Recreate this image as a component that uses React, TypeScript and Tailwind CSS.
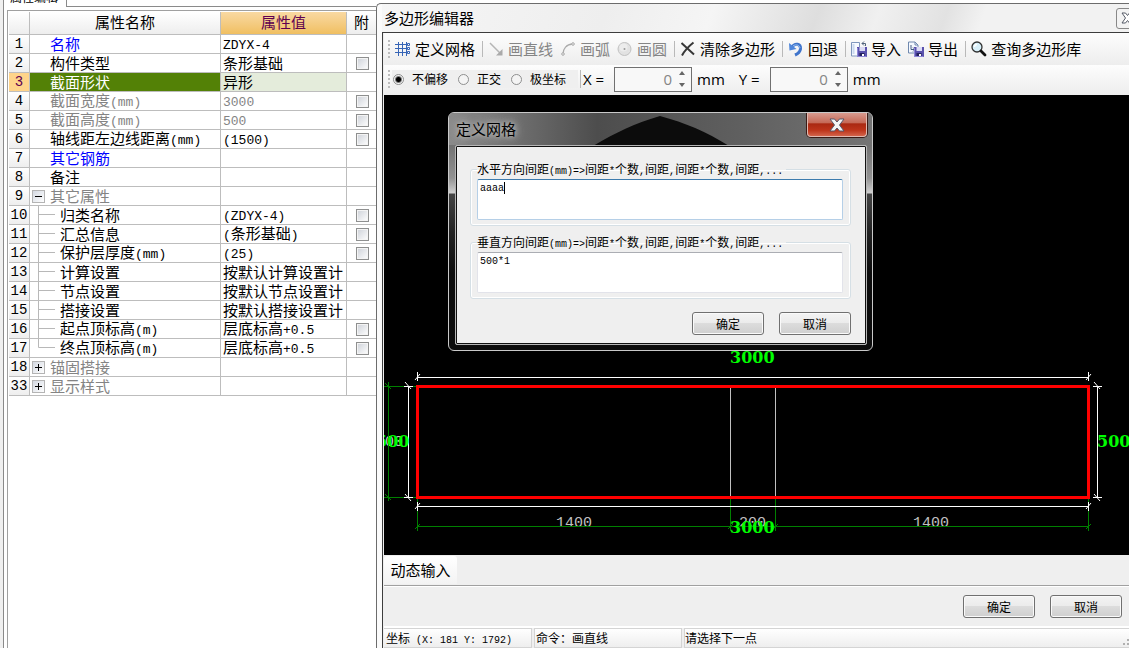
import { useState } from "react";
import type { ReactNode } from "react";

type Row = {
  no: number;
  name: string;
  value?: string;
  check?: boolean;
  kind?: "link" | "muted" | "active";
  tree?: "open" | "closed" | "child" | "last";
};

const rows: Row[] = [
  { no: 1, name: "名称", value: "ZDYX-4", kind: "link" },
  { no: 2, name: "构件类型", value: "条形基础", check: true },
  { no: 3, name: "截面形状", value: "异形", kind: "active" },
  { no: 4, name: "截面宽度(mm)", value: "3000", check: true, kind: "muted" },
  { no: 5, name: "截面高度(mm)", value: "500", check: true, kind: "muted" },
  { no: 6, name: "轴线距左边线距离(mm)", value: "(1500)", check: true },
  { no: 7, name: "其它钢筋", kind: "link" },
  { no: 8, name: "备注" },
  { no: 9, name: "其它属性", kind: "muted", tree: "open" },
  { no: 10, name: "归类名称", value: "(ZDYX-4)", check: true, tree: "child" },
  { no: 11, name: "汇总信息", value: "(条形基础)", check: true, tree: "child" },
  { no: 12, name: "保护层厚度(mm)", value: "(25)", check: true, tree: "child" },
  { no: 13, name: "计算设置", value: "按默认计算设置计", tree: "child" },
  { no: 14, name: "节点设置", value: "按默认节点设置计", tree: "child" },
  { no: 15, name: "搭接设置", value: "按默认搭接设置计", tree: "child" },
  { no: 16, name: "起点顶标高(m)", value: "层底标高+0.5", check: true, tree: "child" },
  { no: 17, name: "终点顶标高(m)", value: "层底标高+0.5", check: true, tree: "last" },
  { no: 18, name: "锚固搭接", kind: "muted", tree: "closed" },
  { no: 33, name: "显示样式", kind: "muted", tree: "closed" },
];

const CJK = "font-['Noto_Sans_CJK_SC',sans-serif]";
const MONO = "font-['Liberation_Mono',monospace]";

// latin runs are half the width of a chinese character
const Mixed = ({ text, small }: { text: string; small?: boolean }) => (
  <>
    {text.split(/([\x20-\x7e]+)/).map((part, i) =>
      i % 2 ? (
        <span key={i} className={`${MONO} whitespace-pre ${small ? "text-[10px]" : "text-[13px]"}`}>{part}</span>
      ) : (
        part
      )
    )}
  </>
);

const TreeMark = ({ tree }: { tree: Row["tree"] }) => {
  if (tree === "child" || tree === "last") {
    return (
      <svg width="30" height="18" className="shrink-0" stroke="#b8b8b8" fill="none">
        <path d={tree === "last" ? "M8.5 0V8.5H25" : "M8.5 0V18M8.5 8.5H25"} />
      </svg>
    );
  }
  if (tree) {
    return (
      <button type="button" aria-label={tree === "open" ? "收起" : "展开"} className="mr-[5px] ml-[2px] size-[13px] shrink-0 border border-[#b4b4b4] bg-linear-to-br from-[#d4d9e2] to-white">
        <svg width="11" height="11" stroke="#000">
          <path d={tree === "open" ? "M2 5.5H9" : "M2 5.5H9M5.5 2V9"} />
        </svg>
      </button>
    );
  }
  return <span className="w-5 shrink-0" />;
};

const PropertyTable = () => (
  <table className={`${CJK} w-full table-fixed border-separate border-spacing-0 text-[15px] leading-[18px]`}>
    <colgroup>
      <col className="w-[21px]" />
      <col />
      <col className="w-[126px]" />
      <col className="w-[29px]" />
    </colgroup>
    <thead>
      <tr className="h-[23px] bg-linear-to-b from-white to-[#ededed]">
        <th className="border-r border-b border-[#bdbdbd] p-0" />
        <th className="border-r border-b border-[#bdbdbd] p-0 pb-[2px] font-normal">属性名称</th>
        <th className="border-r border-b border-[#bdbdbd] bg-linear-to-b from-[#f9d9a2] to-[#f0bf60] p-0 pb-[2px] font-normal text-[#600050]">属性值</th>
        <th className="border-b border-[#bdbdbd] p-0 pb-[2px] font-normal">附</th>
      </tr>
    </thead>
    <tbody>
      {rows.map((r) => (
        <tr key={r.no} className="h-[19px]">
          <td className={`border-r border-b border-[#bdbdbd] p-0 text-center ${r.kind === "active" ? "bg-[#ffd48a] text-[#600050]" : "bg-linear-to-b from-white to-[#eeeeee]"}`}>
            <div className={`${MONO} h-[18px] text-[14px]`}>{r.no}</div>
          </td>
          <td className={`border-r border-b border-[#bdbdbd] p-0 ${r.kind === "active" ? "bg-[#538106] text-white" : r.kind === "link" ? "text-[#0000ff]" : r.kind === "muted" ? "text-[#848484]" : ""}`}>
            <div className="flex h-[18px] items-center whitespace-nowrap">
              <TreeMark tree={r.tree} />
              <span><Mixed text={r.name} /></span>
            </div>
          </td>
          <td className={`border-r border-b border-[#bdbdbd] p-0 ${r.kind === "active" ? "bg-[#e4ecdb]" : r.kind === "muted" ? "text-[#848484]" : ""}`}>
            <div className="flex h-[18px] items-center pl-[2px] whitespace-nowrap">
              <span><Mixed text={r.value ?? ""} /></span>
            </div>
          </td>
          <td className="border-b border-[#bdbdbd] p-0">
            {r.check && (
              <input type="checkbox" aria-label={r.name} className="ml-[9px] block size-[13px] appearance-none border border-[#8e8f8f] bg-linear-to-br from-[#cdd1d8] to-white shadow-[inset_0_0_0_1px_#f4f4f4] checked:bg-[#538106]" />
            )}
          </td>
        </tr>
      ))}
    </tbody>
  </table>
);

const Grip = () => (
  <svg width="3" height="20" className="mr-px shrink-0" stroke="#bcbcbc" strokeWidth="2" strokeDasharray="2 2">
    <path d="M1 1V19" />
  </svg>
);

const Sep = () => <span className="mr-px ml-[3px] h-4 w-px shrink-0 bg-[#b9b9b9]" />;

const Tool = ({ icon, label, disabled }: { icon: ReactNode; label: string; disabled?: boolean }) => (
  <button type="button" disabled={disabled} className="flex shrink-0 items-center gap-1 px-[3px] text-[15px] leading-5 disabled:text-[#858585]">
    <svg width="16" height="16" viewBox="0 0 16 16" fill="none">{icon}</svg>
    {label}
  </button>
);

const floppy = (
  <>
    <path d="M6 6H16V16H7L6 15Z" fill="#5a52ad" />
    <path d="M8.5 6H14V10H8.5Z" fill="#dcdcf5" />
    <path d="M8.5 12H13.5V16H8.5Z" fill="#24215e" />
    <path d="M11 13H13V15.500H11Z" fill="#fff" />
    <path d="M6.500 7V15.500H15.500" stroke="#8e87d8" />
  </>
);

const icons = {
  grid: (
    <>
      <path d="M0 3.500H12M0 7.500H13M0 11.500H12M3.500 1V15M7.500 1V15M11.500 1V15" stroke="#3765b6" />
      <path d="M12.500 2.500H14.500V4.500H12.500ZM12.500 6.500H14.500V8.500H12.500ZM12.500 10.500H14.500V12.500H12.500Z" stroke="#3765b6" fill="#fff" />
    </>
  ),
  line: (
    <>
      <path d="M2 2L13 13" stroke="#b5b5b5" strokeWidth="1.500" />
      <path d="M14.500 8V14.500H8Z" fill="#aaa" />
    </>
  ),
  arc: (
    <>
      <path d="M3 13C3 8 6 3.500 13 3" stroke="#aaa" strokeWidth="1.300" />
      <circle cx="3" cy="13" r="1.300" fill="#eee" stroke="#aaa" />
      <circle cx="13" cy="3" r="1.300" fill="#eee" stroke="#aaa" />
    </>
  ),
  circle: (
    <>
      <circle cx="7.500" cy="8" r="6.500" fill="#e2e2e2" stroke="#c0c0c0" />
      <circle cx="6.500" cy="6.500" r="4" fill="#ececec" />
      <circle cx="7.500" cy="8" r="1" fill="#999" />
    </>
  ),
  clear: <path d="M1.500 2L14 13.500M13.500 1.500C9 5 5 9 2 14.500" stroke="#383838" strokeWidth="2" />,
  undo: (
    <>
      <path d="M4 6C7 1.500 13 2.500 12.500 8C12 11 10.500 12.500 7 14" stroke="#3f74cb" strokeWidth="3" />
      <path d="M1 2L1.500 9.500L8.500 8Z" fill="#4f86da" />
      <path d="M5 5C8 2.800 11.500 4 12 7" stroke="#9cc3f3" />
    </>
  ),
  importIcon: (
    <>
      <path d="M.500 1.500H8.500V15H.500Z" fill="#f7faff" stroke="#7f97bd" />
      <path d="M2.500 3V13" stroke="#c9d8ef" strokeWidth="2" />
      {floppy}
      <path d="M11 2.500H14.500V5M13 .500L11 2.500L13 4.500" stroke="#53647c" />
    </>
  ),
  exportIcon: (
    <>
      <path d="M.500 1H7L10 4V12H.500Z" fill="#f5f9ff" stroke="#6f88ae" />
      <path d="M7 1V4H10" stroke="#6f88ae" />
      <path d="M3 4V8.500H6.500M5 6.500L7 8.500L5 10.500" stroke="#425b80" />
      {floppy}
    </>
  ),
  search: (
    <>
      <circle cx="6" cy="6" r="5" fill="#d8f0fa" stroke="#333" strokeWidth="1.300" />
      <path d="M3.500 6C3.500 4.500 4.500 3.500 6 3.500" stroke="#fff" strokeWidth="1.500" />
      <path d="M10 10L14 14" stroke="#111" strokeWidth="2.800" strokeLinecap="round" />
    </>
  ),
};

const NumberBox = ({ label, id }: { label: string; id: string }) => {
  const [value, setValue] = useState(0);
  return (
    <div className="flex shrink-0 items-center font-['Open_Sans',sans-serif] text-[15px]">
      <label htmlFor={id} className="w-[31px] whitespace-nowrap">{label} =</label>
      <div className="flex h-[25px] w-[78px] items-center border border-[#707070] bg-[#f8f8f8]">
        <input id={id} value={value} onChange={(e) => setValue(Number(e.target.value) || 0)} className="min-w-0 flex-1 text-right text-[#858585] outline-none" />
        <div className="ml-[7px] flex w-[12px] flex-col gap-2">
          <button type="button" aria-label="增加" onClick={() => setValue(value + 1)}>
            <svg width="7" height="4" className="block" fill="#666"><path d="M3 0L6 4H0Z" /></svg>
          </button>
          <button type="button" aria-label="减少" onClick={() => setValue(value - 1)}>
            <svg width="7" height="4" className="block" fill="#666"><path d="M0 0H6L3 4Z" /></svg>
          </button>
        </div>
      </div>
      <span className="ml-[5px]">mm</span>
    </div>
  );
};

const PushButton = ({ children }: { children: ReactNode }) => (
  <button type="button" className="h-[23px] w-[72px] rounded-[3px] border border-[#707070] bg-[linear-gradient(#f3f3f3,#ebebeb_49%,#dcdcdc_50%,#cfcfcf)] text-xs leading-5 shadow-[inset_0_0_0_1px_#fafafa]">
    {children}
  </button>
);

const Drawing = () => (
  <svg className="absolute inset-0 h-full w-full" fill="none" strokeWidth="1">
    <g className="font-['Liberation_Mono',monospace] text-[15px]" fill="#c0c0c0">
      <text x="172" y="432">1400</text>
      <text x="355" y="432">200</text>
      <text x="529" y="432">1400</text>
      <text x="-8" y="351">500</text>
    </g>
    <g stroke="#008000">
      <path d="M0 291.500H33M0 402.500H33M4.500 287V406M1 288L7 294M1 399L7 405" />
      <path d="M33 431.500H705M33.500 404V436M346.500 404V436M391.500 404V436M704.500 404V436" />
      <path d="M31 434L36 429M344 434L349 429M389 434L394 429M702 434L707 429" />
    </g>
    <path d="M346.500 293V401M391.500 293V401" stroke="#c0c0c0" />
    <g stroke="#fff">
      <path d="M33 282.500H705M33.500 277V286M704.500 277V286M31 285L36 279M702 285L707 279" />
      <path d="M33 411.500H705M33.500 407V416M704.500 407V416M31 414L36 408M702 414L707 408" />
      <path d="M24.500 291V403M20 291.500H29M20 402.500H29M21 287L27 294M21 399L27 406" />
      <path d="M713.500 291V403M709 291.500H718M709 402.500H718M710 287L716 294M710 399L716 406" />
    </g>
    <rect x="33.500" y="291.500" width="671" height="111" stroke="#f00" strokeWidth="3" />
    <g className="font-['DejaVu_Serif',serif] text-[16px] font-bold" fill="#00ff00">
      <text x="346" y="268">3000</text>
      <text x="346" y="438">3000</text>
      <text x="-8" y="352">500</text>
      <text x="713" y="352">500</text>
    </g>
  </svg>
);

const Field = ({ id, label, value, focused }: { id: string; label: string; value: string; focused?: boolean }) => (
  <fieldset className="rounded-[3px] border border-[#d5dfe5] px-[6px] pb-[5px] shadow-[inset_0_0_0_1px_#fff]">
    <legend className="h-[14px] pr-[3px] text-xs leading-[14px] whitespace-nowrap">
      <label htmlFor={id}><Mixed text={label} small /></label>
    </legend>
    <div className="relative mt-[3px] mr-px">
      <textarea
        id={id}
        defaultValue={value}
        spellCheck={false}
        className={`block h-[41px] w-full resize-none rounded-[2px] border bg-white px-[2px] py-[2px] text-[10px] leading-[14px] outline-none font-['Liberation_Mono',monospace] ${focused ? "border-[#b5cfe7] border-t-[#3d7bad]" : "border-[#e2e3ea] border-t-[#abadb3]"}`}
      />
      {focused && <span className="absolute top-[3px] left-[27px] h-3 w-px bg-black" />}
    </div>
  </fieldset>
);

const GridDialog = () => (
  <section className="absolute top-[17px] left-16 w-[425px] overflow-hidden rounded-[6px] border border-[#c9c9c9] bg-[linear-gradient(#626262,#707070_30px,#929292_65px,#d0d0d0_80px,#444_81px,#222_120px,#0c0c0c_160px)]">
    <svg width="423" height="32" className="absolute top-0 left-0">
      <defs>
        <linearGradient id="glass">
          <stop offset="0" stopColor="#8b8b8b" />
          <stop offset=".35" stopColor="#4d4d4d" />
          <stop offset=".7" stopColor="#606060" />
          <stop offset="1" stopColor="#747474" />
        </linearGradient>
      </defs>
      <path d="M0 0H423V33H0Z" fill="url(#glass)" />
      <path d="M144 33C166 20 184 11 211 3C237 10 258 19 280 33Z" fill="#0c0c0c" />
    </svg>
    <header className="relative flex h-8 items-start justify-between pr-[5px] pl-[7px]">
      <h2 className="mt-[6px] text-[15px] leading-5 [text-shadow:0_0_4px_#bbb,0_0_8px_#bbb,0_0_12px_#aaa]">定义网格</h2>
      <button type="button" aria-label="关闭" className="flex h-6 w-[60px] items-center justify-center rounded-b-[4px] border border-t-0 border-[#e0b9b0] bg-[linear-gradient(#d79a8e,#c46653_45%,#a92811_46%,#bd351b_75%,#d3634a)] shadow-[0_0_0_1px_#3a1b16]">
        <svg width="16" height="14" viewBox="0 0 16 14">
          <path d="M1 1H5.500L8 4L10.500 1H15L10.500 7L15 13H10.500L8 10L5.500 13H1L5.500 7Z" fill="#f4f4f4" stroke="#53566a" />
        </svg>
      </button>
    </header>
    <form className="relative mr-[5px] mb-[5px] ml-[6px] rounded-[2px] border border-[#b6b6b6] bg-[#efefef] shadow-[inset_0_0_0_1px_#111]">
      <div className="flex flex-col gap-[9px] pt-4 pr-[15px] pl-[14px]">
        <Field id="horizontal" label="水平方向间距(mm)=>间距*个数,间距,间距*个数,间距,..." value="aaaa" focused />
        <Field id="vertical" label="垂直方向间距(mm)=>间距*个数,间距,间距*个数,间距,..." value="500*1" />
      </div>
      <div className="mt-[13px] flex justify-end gap-[15px] pr-[15px] pb-[9px]">
        <PushButton>确定</PushButton>
        <PushButton>取消</PushButton>
      </div>
    </form>
  </section>
);

const modes = ["不偏移", "正交", "极坐标"];

export default function App() {
  const [mode, setMode] = useState("不偏移");
  return (
    <div className={`${CJK} flex h-screen overflow-hidden bg-white text-black`}>
      <aside className="flex w-[376px] shrink-0 bg-white">
        <div className="w-1 shrink-0 border-r border-[#8a8a8a] bg-[#f0f0f0]" />
        <div className="flex min-w-0 flex-1 flex-col">
          <div className="flex h-[7px] shrink-0">
            <div className="flex h-[7px] w-[63px] items-end overflow-hidden border-r border-[#8a8a8a] pl-[6px] text-xs leading-[14px]">
              <span className="mb-[3px]">属性编辑</span>
            </div>
            <div className="flex-1 border-b border-[#8a8a8a] bg-white" />
          </div>
          <div className="mt-[3px] ml-[3px] flex-1 border-t border-l border-[#a0a0a0] pt-px pl-px">
            <PropertyTable />
          </div>
        </div>
      </aside>

      <main className="mt-[3px] flex min-w-0 flex-1 flex-col overflow-hidden rounded-tl-[5px] border-t border-l border-[#6c6c6c] bg-linear-to-r from-[#fbfbfb] to-[#eeeeee] pl-[5px]">
        <header className="flex h-7 shrink-0 items-center justify-between bg-[linear-gradient(110deg,#f6f6f6_0%,#eeeeee_30%,#f5f5f5_44%,#dedede_58%,#f0f0f0_66%,#e2e2e2_75%,#f2f2f2_80%)] pl-[2px]">
          <h1 className="text-[15px] leading-5">多边形编辑器</h1>
          <button type="button" aria-label="关闭" className="-mr-8 flex h-[21px] w-[45px] items-center rounded-[3px] border border-[#888] bg-[#f3f3f3] pl-1">
            <svg width="13" height="12" viewBox="0 0 13 12">
              <path d="M1 1H4.500L6.500 3.500L8.500 1H12L8.500 6L12 11H8.500L6.500 8.500L4.500 11H1L4.500 6Z" fill="#fff" stroke="#555a66" />
            </svg>
          </button>
        </header>

        <div className="flex min-h-0 flex-1 flex-col border-t border-l border-[#3d3d3d] bg-[#efefef] pl-px">
          <nav className="flex h-8 shrink-0 items-center bg-linear-to-b from-[#fdfdfd] to-[#ededed] pl-[4px] whitespace-nowrap">
            <Grip />
            <div className="flex items-center gap-px">
              <Tool icon={icons.grid} label="定义网格" />
              <Sep />
              <Tool icon={icons.line} label="画直线" disabled />
              <Tool icon={icons.arc} label="画弧" disabled />
              <Tool icon={icons.circle} label="画圆" disabled />
              <Sep />
              <Tool icon={icons.clear} label="清除多边形" />
              <Sep />
              <Tool icon={icons.undo} label="回退" />
              <Sep />
              <Tool icon={icons.importIcon} label="导入" />
              <Tool icon={icons.exportIcon} label="导出" />
              <Sep />
              <Tool icon={icons.search} label="查询多边形库" />
            </div>
          </nav>

          <div className="flex h-[30px] shrink-0 items-center bg-linear-to-b from-[#fdfdfd] to-[#ededed] pb-[2px] pl-[4px]">
            <Grip />
            <div className="flex h-[18px] w-[186px] shrink-0 items-center gap-[10px] bg-[#efefef] pl-px text-xs whitespace-nowrap">
              {modes.map((m) => (
                <label key={m} className="flex items-center gap-2">
                  <input type="radio" name="mode" checked={mode === m} onChange={() => setMode(m)} className="size-[11px] appearance-none rounded-full border border-[#8e8f8f] bg-[#f4f4f4] checked:bg-[radial-gradient(#000_2px,#f4f4f4_4px)]" />
                  {m}
                </label>
              ))}
            </div>
            <span className="mx-[2px] h-[18px] w-px shrink-0 bg-[#b9b9b9]" />
            <div className="flex gap-[14px]">
              <NumberBox label="X" id="offset-x" />
              <NumberBox label="Y" id="offset-y" />
            </div>
          </div>

          <div className="relative min-h-0 flex-1 overflow-hidden bg-black">
            <Drawing />
            <GridDialog />
          </div>

          <div className="flex h-[31px] shrink-0 items-center border-b border-[#a0a0a0]">
            <button type="button" className="h-7 w-[73px] rounded-t-[3px] bg-linear-to-b from-white to-[#f3f3f3] text-[15px]">动态输入</button>
          </div>
          <div className="flex h-10 shrink-0 items-center justify-end gap-[15px] border-t border-white pr-[7px]">
            <PushButton>确定</PushButton>
            <PushButton>取消</PushButton>
          </div>
          <footer className="flex h-[22px] shrink-0 gap-[2px] border-t-2 border-white text-xs leading-[18px] whitespace-nowrap">
            <div className="w-[148px] border border-l-0 border-[#d4d4d4] bg-linear-to-b from-white to-[#eeeeee] pl-[2px]"><Mixed text="坐标 (X: 181 Y: 1792)" small /></div>
            <div className="w-[148px] border border-[#d4d4d4] bg-linear-to-b from-white to-[#eeeeee] pl-px">命令：画直线</div>
            <div className="flex flex-1 items-end justify-between border border-r-0 border-[#d4d4d4] bg-linear-to-b from-white to-[#eeeeee]">
              <span>请选择下一点</span>
              <svg width="7" height="8" fill="#b0b0b0"><path d="M5 0H7V2H5ZM5 4H7V6H5ZM1 4H3V6H1Z" /></svg>
            </div>
          </footer>
        </div>
      </main>
    </div>
  );
}
